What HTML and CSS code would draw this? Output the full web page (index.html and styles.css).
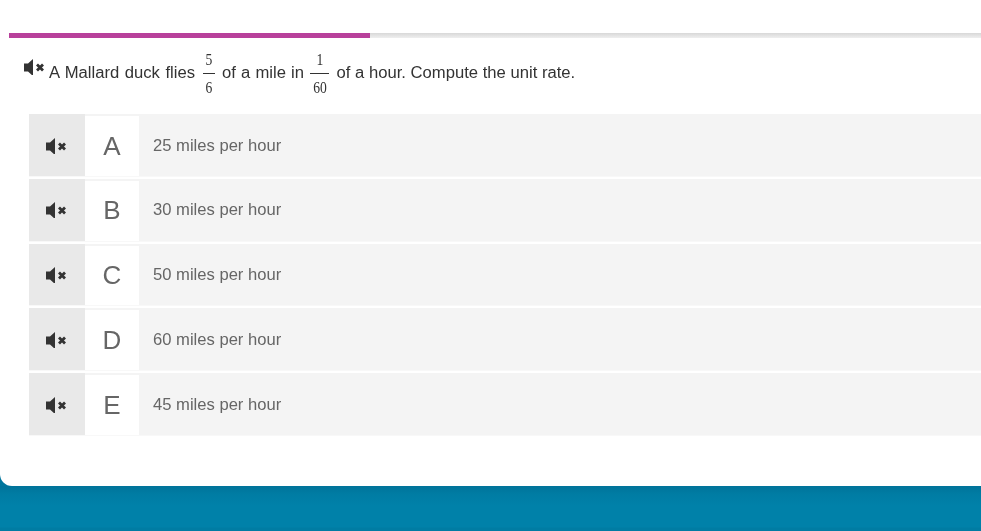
FILE: index.html
```html
<!DOCTYPE html>
<html lang="en">
<head>
<meta charset="utf-8">
<title>Question</title>
<link rel="stylesheet" href="styles.css">
</head>
<body>
<main class="card">
  <div class="progress"><div class="progress-fill"></div></div>
  <div class="question">
    <svg class="mute mute-q" viewBox="0 -2 20 18"><path d="M0 4.500h4l5-4.500v17l-5-4.500h-4z"/><path class="x" d="M13 5.500l6 6M19 5.500l-6 6"/></svg>
    <span class="q-text q-first">A Mallard duck flies</span>
    <span class="frac"><span class="num"><span class="digit">5</span></span><span class="den"><span class="digit">6</span></span></span>
    <span class="q-text q-second">of a mile in</span>
    <span class="frac frac-wide"><span class="num"><span class="digit">1</span></span><span class="den"><span class="digit">60</span></span></span>
    <span class="q-text q-last">of a hour. Compute the unit rate.</span>
  </div>
  <div class="options">
    <div class="option">
      <div class="speaker"><svg class="mute" viewBox="0 -2 20 18"><path d="M0 4.500h4l5-4.500v17l-5-4.500h-4z"/><path class="x" d="M13 5.500l6 6M19 5.500l-6 6"/></svg></div>
      <div class="letter">A</div>
      <div class="answer">25 miles per hour</div>
    </div>
    <div class="option">
      <div class="speaker"><svg class="mute" viewBox="0 -2 20 18"><path d="M0 4.500h4l5-4.500v17l-5-4.500h-4z"/><path class="x" d="M13 5.500l6 6M19 5.500l-6 6"/></svg></div>
      <div class="letter">B</div>
      <div class="answer">30 miles per hour</div>
    </div>
    <div class="option">
      <div class="speaker"><svg class="mute" viewBox="0 -2 20 18"><path d="M0 4.500h4l5-4.500v17l-5-4.500h-4z"/><path class="x" d="M13 5.500l6 6M19 5.500l-6 6"/></svg></div>
      <div class="letter">C</div>
      <div class="answer">50 miles per hour</div>
    </div>
    <div class="option">
      <div class="speaker"><svg class="mute" viewBox="0 -2 20 18"><path d="M0 4.500h4l5-4.500v17l-5-4.500h-4z"/><path class="x" d="M13 5.500l6 6M19 5.500l-6 6"/></svg></div>
      <div class="letter">D</div>
      <div class="answer">60 miles per hour</div>
    </div>
    <div class="option">
      <div class="speaker"><svg class="mute" viewBox="0 -2 20 18"><path d="M0 4.500h4l5-4.500v17l-5-4.500h-4z"/><path class="x" d="M13 5.500l6 6M19 5.500l-6 6"/></svg></div>
      <div class="letter">E</div>
      <div class="answer">45 miles per hour</div>
    </div>
  </div>
</main>
<div class="footer"></div>
</body>
</html>
```
FILE: styles.css
```css
* { box-sizing: border-box; }
html, body { margin: 0; height: 100%; overflow: hidden; }
body {
  background: #00769d;
  font-family: "Liberation Sans", Arial, sans-serif;
}
.card {
  height: 486px;
  background: #fff;
  border-bottom-left-radius: 12px;
  padding: 33px 0 0 9px;
}
.progress {
  height: 5px;
  background: linear-gradient(#d8d8d8, #eeeeee);
}
.progress-fill {
  width: 361px;
  height: 100%;
  background: #b8409b;
}
.question {
  display: flex;
  align-items: center;
  height: 76px;
  padding: 0 0 6px 15px;
  font-size: 16.650px;
  color: #333;
  will-change: transform;
}
.q-first { word-spacing: 0.900px; }
.q-second { word-spacing: 0.500px; }
.mute { display: block; width: 20px; height: 18px; fill: #333; }
.mute .x { fill: none; stroke: #333; stroke-width: 2.800; }
.mute-q { margin: 0 5px 14px 0; }
.frac {
  display: flex;
  flex-direction: column;
  align-items: center;
  width: 12px;
  margin: 3px 7px 0 8px;
  font-family: "Liberation Serif", serif;
  font-size: 16px;
  color: #333;
}
.frac-wide { width: 19px; margin: 3px 7.500px 0 6px; }
.num { width: 100%; height: 27px; line-height: 26px; text-align: center; border-bottom: 1px solid #333; }
.den { width: 100%; height: 28px; line-height: 28px; text-align: center; }
.digit { display: inline-block; transform: scaleX(0.85); }
.options {
  display: flex;
  flex-direction: column;
  gap: 2px;
  margin-left: 20px;
  will-change: transform;
}
.option {
  display: flex;
  height: 62.750px;
  background: #f4f4f4;
  border-bottom: 1.500px solid #f8f8f8;
}
.speaker {
  width: 56px;
  padding-bottom: 0.500px;
  background: #e9e9e9;
  display: flex;
  align-items: center;
  justify-content: center;
}
.speaker .mute { margin-right: 2px; }
.letter {
  width: 54px;
  margin: 2px 0 0;
  padding-top: 0.600px;
  background: #fff;
  color: #666;
  font-size: 26px;
  display: flex;
  align-items: center;
  justify-content: center;
}
.answer {
  padding: 1.500px 0 0 14px;
  display: flex;
  align-items: center;
  font-size: 16.600px;
  color: #666;
}
.footer {
  height: 45px;
  background: linear-gradient(#00739a, #007ca3 8px, #0081a9 20px, #0081a9 41px, #007ca3 42px);
}
```
